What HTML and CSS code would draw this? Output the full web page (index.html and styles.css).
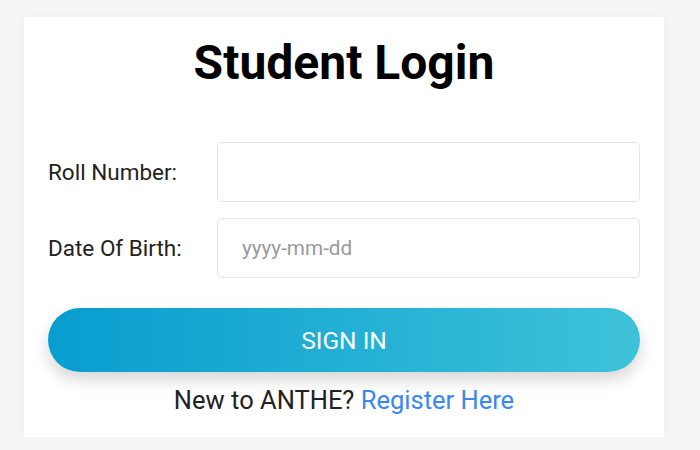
FILE: index.html
```html
<!DOCTYPE html>
<html lang="en">
<head>
<meta charset="utf-8">
<title>Student Login</title>
<link rel="stylesheet" href="styles.css">
</head>
<body>
<main class="card">
  <h1 class="title">Student Login</h1>
  <form class="form">
    <div class="row">
      <label class="label" for="roll">Roll Number:</label>
      <input class="input" id="roll" type="text">
    </div>
    <div class="row">
      <label class="label" for="dob">Date Of Birth:</label>
      <input class="input" id="dob" type="text" placeholder="yyyy-mm-dd">
    </div>
    <button class="btn" type="button">SIGN IN</button>
  </form>
  <p class="register">New to ANTHE? <a class="link" href="#">Register Here</a></p>
</main>
</body>
</html>
```

FILE: styles.css
```css
html, body {
  margin: 0;
  padding: 0;
}
body {
  background: #f5f5f5;
  font-family: Roboto, "Liberation Sans", sans-serif;
  color: #222;
}
.card {
  width: 640px;
  margin: 17px 0 0 24px;
  box-sizing: border-box;
  background: #fff;
  padding: 18px 24px 22px 24px;
  box-shadow: 0 0 8px rgba(0, 0, 0, 0.03);
}
.title {
  margin: 0;
  text-align: center;
  font-size: 48px;
  line-height: 56px;
  font-weight: 700;
  color: #000;
}
.form {
  display: flex;
  flex-direction: column;
  margin-top: 51px;
}
.row {
  display: grid;
  grid-template-columns: 169px 1fr;
  align-items: center;
  margin-bottom: 16px;
}
.row:last-of-type {
  margin-bottom: 0;
}
.label {
  font-size: 22.5px;
  color: #222;
}
.input {
  height: 60px;
  box-sizing: border-box;
  border: 1px solid #e4e4e4;
  border-radius: 5px;
  padding: 0 24px;
  font-family: Roboto, "Liberation Sans", sans-serif;
  font-size: 20.7px;
  color: #222;
  outline: none;
}
.input::placeholder {
  color: #9a9a9a;
}
.btn {
  margin-top: 30px;
  height: 64px;
  border: none;
  border-radius: 32px;
  background: linear-gradient(90deg, #079dcf 0%, #3ec2d9 100%);
  color: #fff;
  font-family: Roboto, "Liberation Sans", sans-serif;
  font-size: 24.5px;
  box-shadow: 0 8px 16px rgba(0, 0, 0, 0.16);
}
.register {
  margin: 13px 0 0;
  text-align: center;
  font-size: 25.5px;
  line-height: 30px;
  color: #222;
}
.link {
  color: #3a87ef;
  text-decoration: none;
}
```
